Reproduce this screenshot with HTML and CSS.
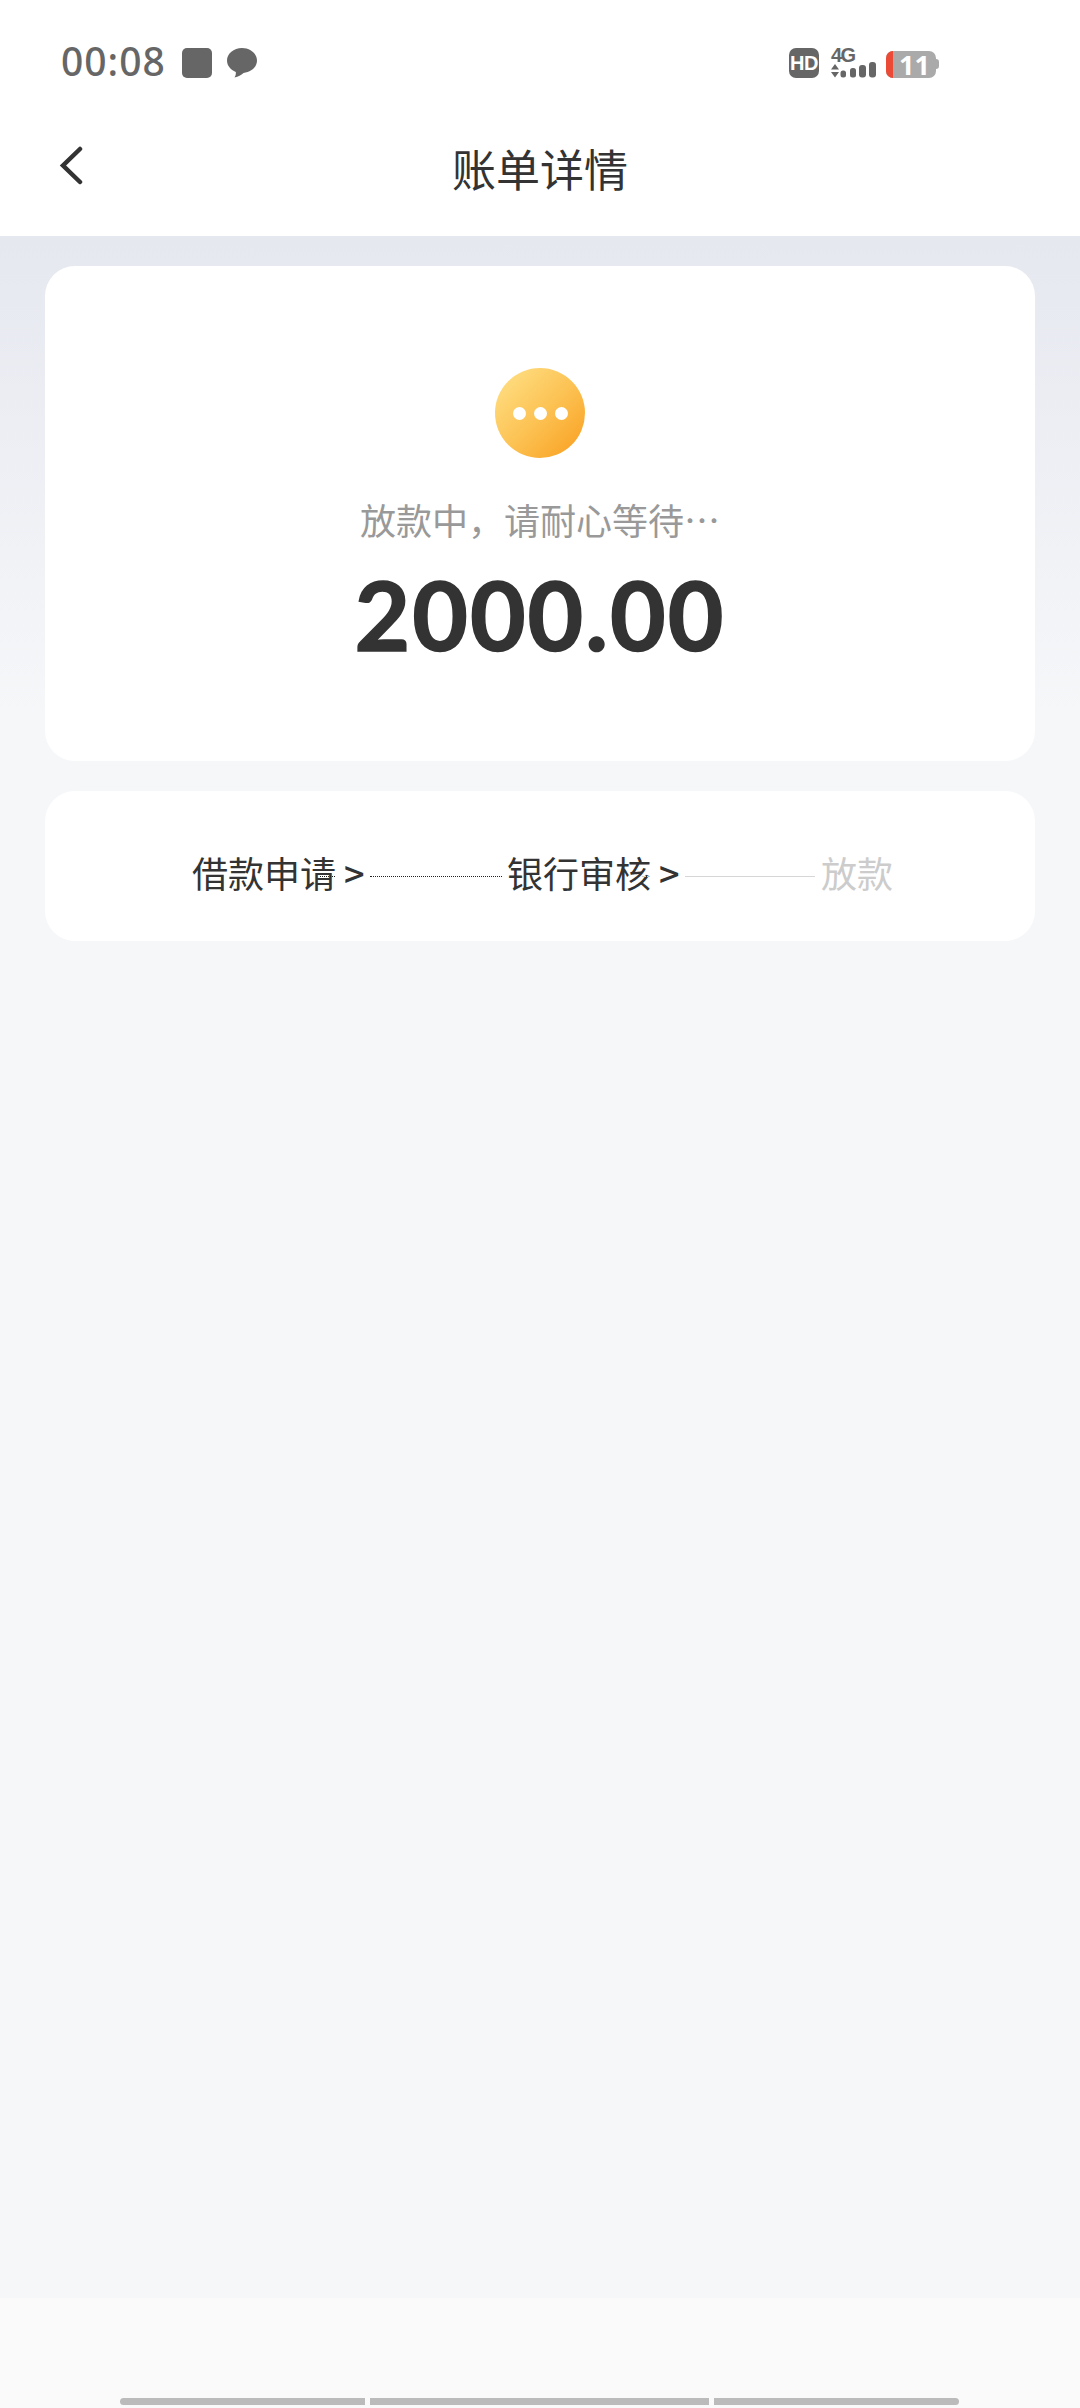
FILE: index.html
```html
<!DOCTYPE html>
<html lang="zh-CN">
<head>
<meta charset="utf-8">
<title>账单详情</title>
<link rel="stylesheet" href="styles.css">
</head>
<body>
<div class="page">
  <header class="top">
    <div class="status">
      <div class="status-left">
        <span class="time">00:08</span>
        <span class="square"></span>
        <svg class="bubble" width="30" height="30" viewBox="0 0 30 30"><path d="M15 0C23.300 0 30 5.600 30 12.500C30 19 24.200 24.300 16.500 24.900C14 27.200 11.500 28.700 7.500 29.500C8.800 27.600 9 25.600 8.800 23.900C3.500 21.900 0 17.600 0 12.500C0 5.600 6.700 0 15 0Z" fill="#666"/></svg>
      </div>
      <div class="status-right">
        <span class="hd">HD</span>
        <span class="net">
          <span class="net-top">4G</span>
          <svg width="45" height="16" viewBox="0 0 45 16"><path d="M4 2L8 7.500H0ZM0 10H8L4 15.500Z" fill="#666"/><rect x="9.500" y="8.500" width="5.500" height="7" rx="2.500" fill="#666"/><rect x="19" y="6" width="6" height="9.500" rx="2.500" fill="#666"/><rect x="28" y="3" width="7" height="12.500" rx="3" fill="#666"/><rect x="38" y="0" width="7" height="15.500" rx="3" fill="#666"/></svg>
        </span>
        <span class="battery"><span class="batt-low"></span><span class="batt-num">11</span></span>
        <span class="batt-nub"></span>
      </div>
    </div>
    <div class="nav">
      <svg class="back" width="26" height="42" viewBox="0 0 26 42"><path d="M21 3L4 19.500L21 36" fill="none" stroke="#333" stroke-width="4.500" stroke-linecap="round" stroke-linejoin="miter"/></svg>
      <h1 class="title">账单详情</h1>
    </div>
  </header>
  <main class="body">
    <section class="card amount-card">
      <div class="pending"><i></i><i></i><i></i></div>
      <p class="hint">放款中，请耐心等待…</p>
      <p class="amount">2000.00</p>
    </section>
    <section class="card steps">
      <span class="step done tick-dark">借款申请</span><span class="arrow">&gt;</span>
      <span class="line dark"></span>
      <span class="step done tick-light">银行审核</span><span class="arrow">&gt;</span>
      <span class="line light"></span>
      <span class="step off">放款</span>
    </section>
  </main>
  <footer class="gesture">
    <span class="pill p1"></span><span class="pill p2"></span><span class="pill p3"></span>
  </footer>
</div>
</body>
</html>
```

FILE: styles.css
```css
* { box-sizing: border-box; }
html, body { margin: 0; padding: 0; }
body { font-family: "Noto Sans", "Noto Sans CJK SC", sans-serif; background: #f6f7f9; }
.page { width: 1080px; height: 2408px; display: flex; flex-direction: column; overflow: hidden; }
.top { height: 236px; background: #fff; flex: none; }
.status { height: 126px; padding: 48px 0 0 61px; display: flex; justify-content: space-between; align-items: flex-start; }
.status-left { display: flex; align-items: center; height: 30px; }
.time { font-size: 39px; font-weight: 500; line-height: 30px; color: #666; letter-spacing: 1px; width: 121px; position: relative; top: -2px; }
.square { width: 30px; height: 30px; background: #666; border-radius: 5px; }
.bubble { margin-left: 15px; }
.status-right { display: flex; align-items: flex-start; padding-right: 141px; }
.hd { width: 30px; height: 30px; border-radius: 7px; background: #666; color: #fff; font: 700 20px/30px "Liberation Sans", sans-serif; letter-spacing: -0.5px; text-align: center; }
.net { margin-left: 12px; width: 45px; height: 30px; display: flex; flex-direction: column; }
.net-top { font: 700 20px/14px "Liberation Sans", sans-serif; letter-spacing: -1.5px; color: #666; }
.battery { margin-left: 10px; margin-top: 3px; width: 50px; height: 27px; border-radius: 7px; background: #aaa; display: flex; }
.batt-low { width: 7px; background: #ea4a36; border-radius: 7px 0 0 7px; }
.batt-num { flex: 1; font: 700 27px/27px "Noto Sans", sans-serif; color: #fff; text-align: center; }
.batt-nub { width: 3px; height: 10px; margin-top: 11px; background: #aaa; border-radius: 0 3px 3px 0; }
.nav { height: 110px; padding-bottom: 27px; position: relative; display: flex; align-items: center; justify-content: center; }
.back { position: absolute; left: 59px; top: 20px; }
.title { margin: 0; font: 400 44px/60px "Noto Sans CJK SC", sans-serif; color: #333; }
.body { flex: 1; padding: 30px 45px 0; background: linear-gradient(180deg, #e6e8f0 0, #f6f7f9 480px, #f6f7f9 100%); display: flex; flex-direction: column; gap: 30px; }
.card { background: #fff; border-radius: 30px; }
.amount-card { height: 495px; padding-top: 102px; display: flex; flex-direction: column; align-items: center; }
.pending { width: 90px; height: 90px; border-radius: 50%; background: linear-gradient(135deg, #ffe38a 0%, #fcc050 55%, #f99d1c 100%); display: flex; align-items: center; justify-content: center; gap: 8px; }
.pending i { width: 13px; height: 13px; border-radius: 50%; background: #fff; }
.hint { margin: 36px 0 0; font: 400 36px/50px "Noto Sans CJK SC", sans-serif; color: #999; }
.amount { margin: 15px 0 0; font: 700 96px/110px "Lato", sans-serif; letter-spacing: 2px; -webkit-text-stroke: 1.5px #333; color: #333; }
.steps { height: 150px; padding: 56px 0 0 147px; display: flex; align-items: flex-start; }
.step { font: 400 36px/50px "Noto Sans CJK SC", sans-serif; position: relative; }
.done { color: #333; }
.off { color: #ccc; }
.tick-dark::after, .tick-light::after { content: ""; position: absolute; right: 1px; top: 29px; width: 15px; border-top: 1px dotted #222; }
.tick-light::after { width: 8px; border-top-color: #ccc; }
.arrow { font: 500 36px/50px "Noto Sans CJK SC", sans-serif; color: #333; margin-left: 8px; width: 26px; }
.line { width: 132px; height: 1px; margin: 29px 5px 0 0; }
.dark { border-top: 1px dotted #222; }
.light { width: 130px; margin-right: 6px; background: #d6d6d6; }
.gesture { height: 110px; flex: none; background: #fafafa; padding: 100px 0 0 120px; display: flex; gap: 5px; align-items: flex-start; }
.pill { height: 7px; background: #bbb; }
.p1 { width: 245px; border-radius: 4px 0 0 4px; }
.p2 { width: 339px; }
.p3 { width: 245px; border-radius: 0 4px 4px 0; }
```
